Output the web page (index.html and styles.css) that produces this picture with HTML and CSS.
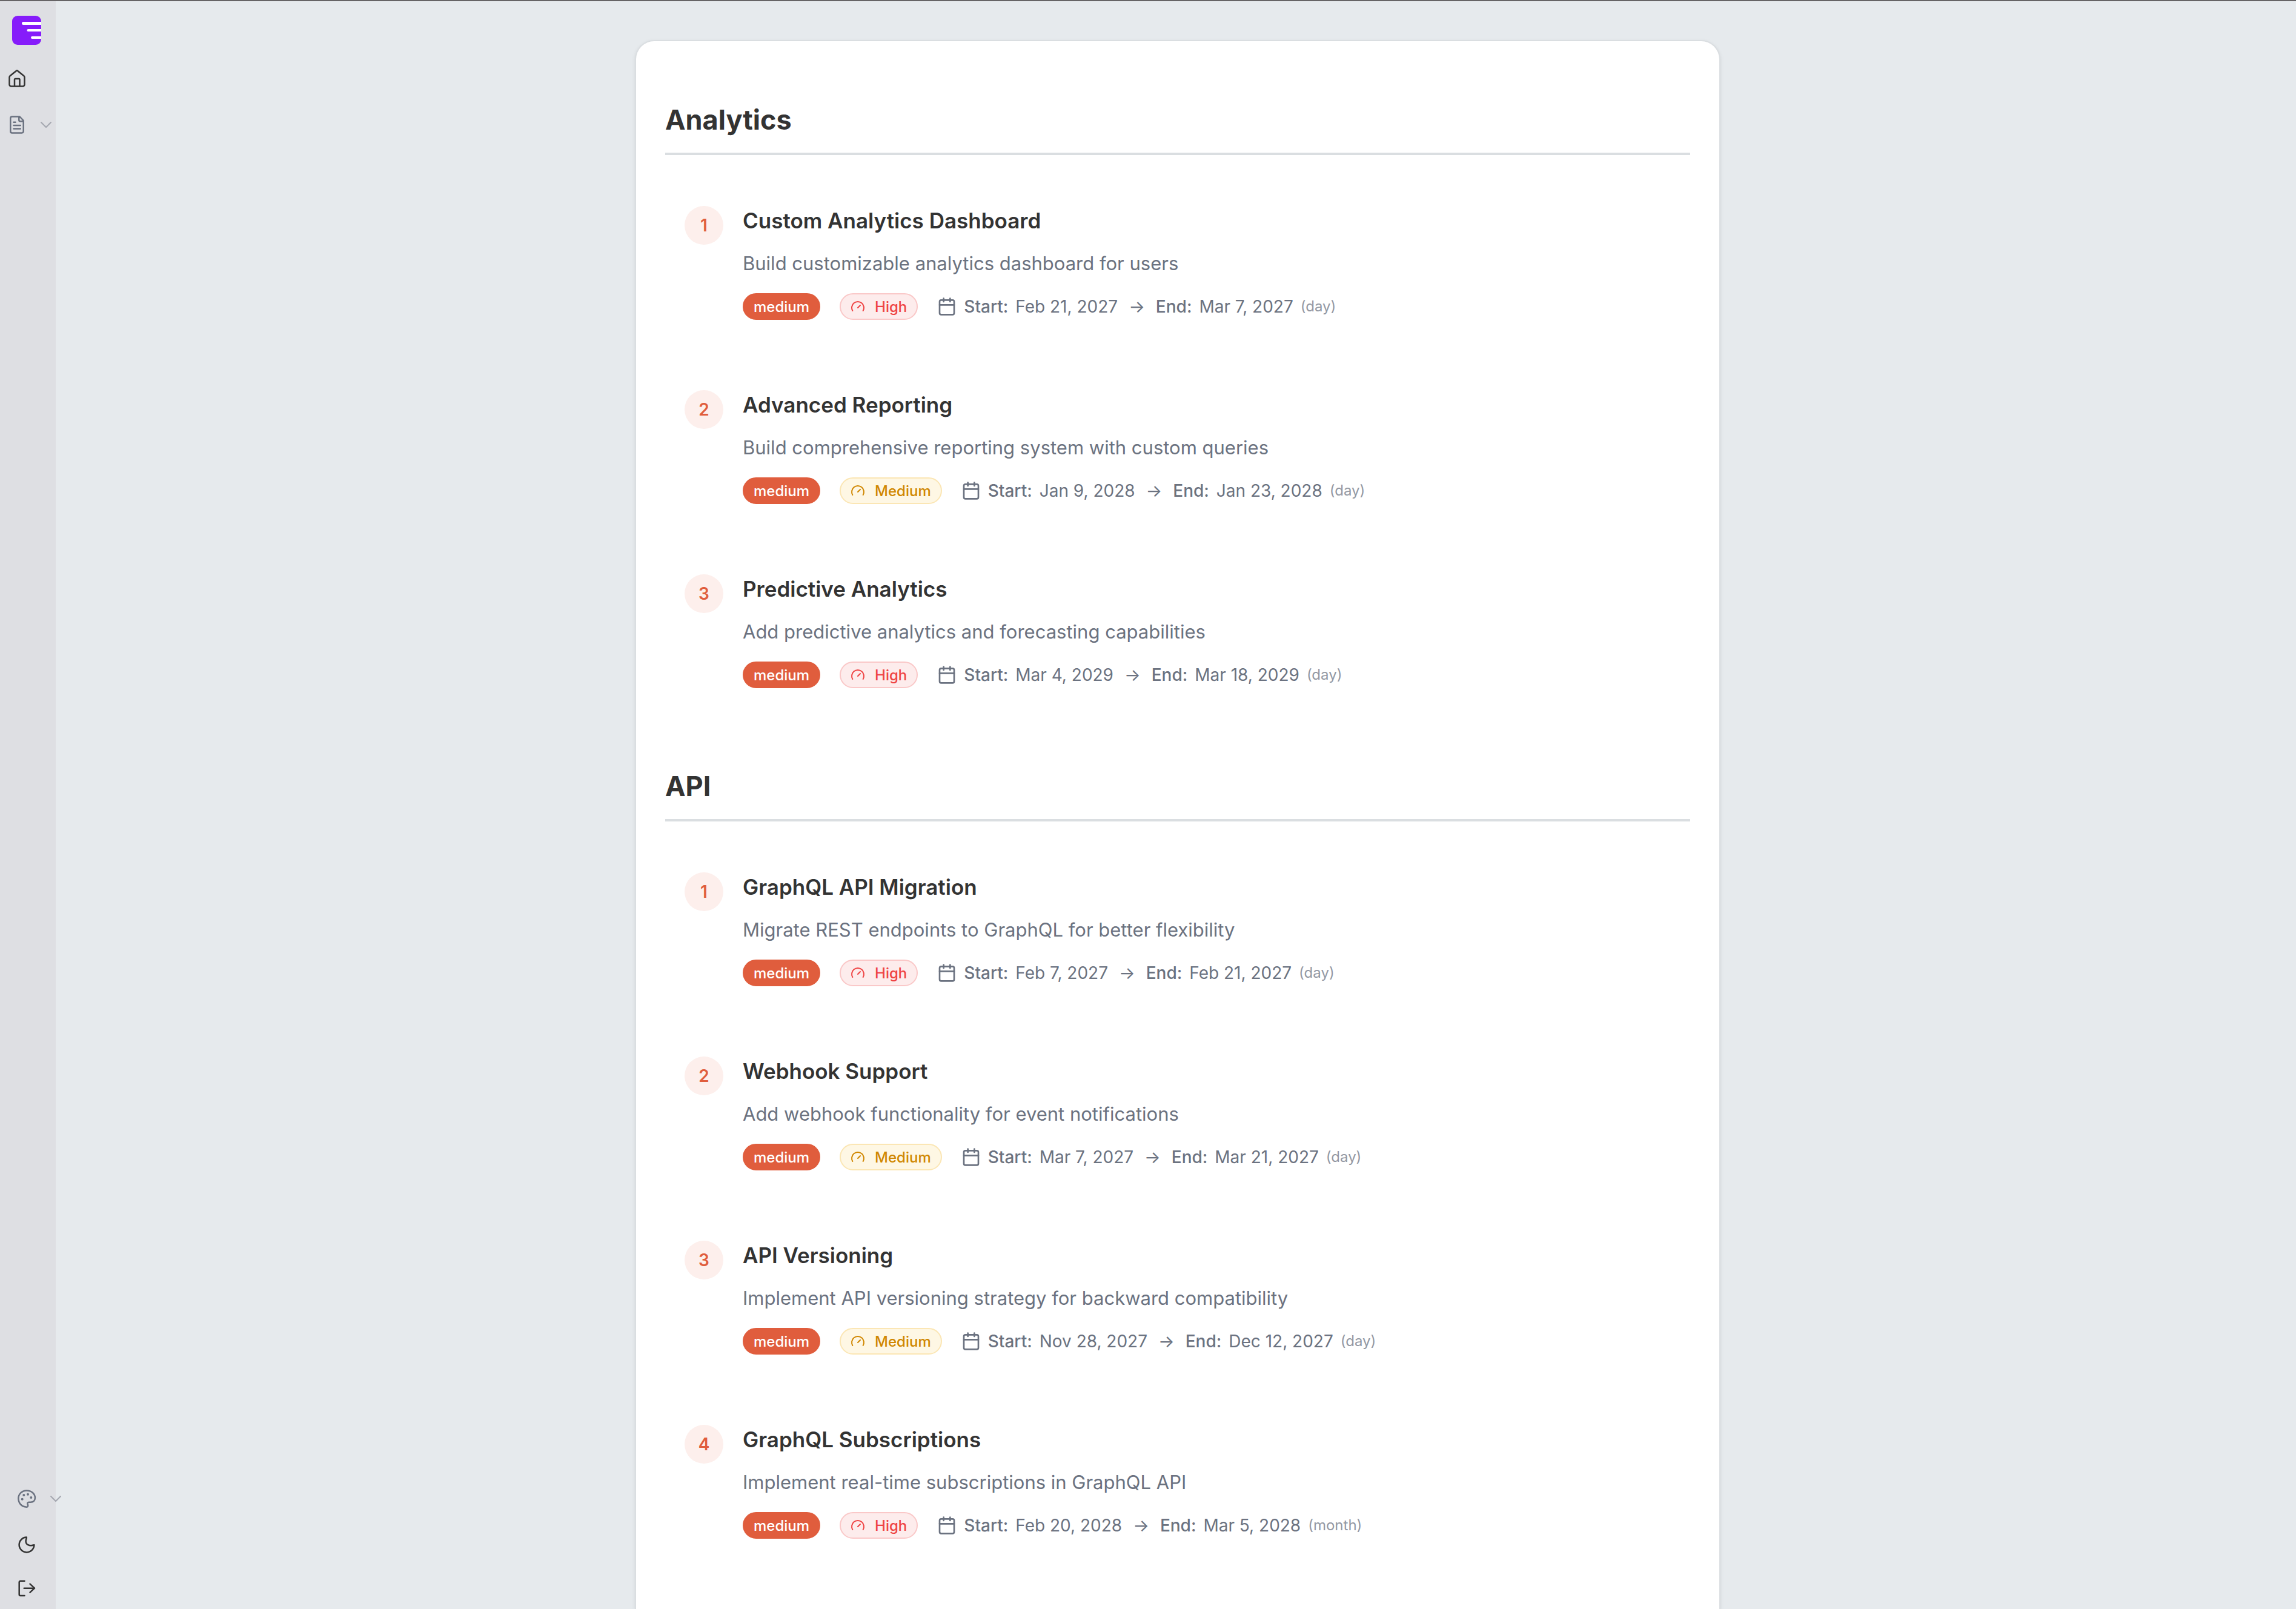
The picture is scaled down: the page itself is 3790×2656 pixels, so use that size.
FILE: index.html
```html
<!DOCTYPE html>
<html lang="en">
<head>
<meta charset="utf-8">
<meta name="viewport" content="width=device-width, initial-scale=1">
<title>Roadmap</title>
<link rel="stylesheet" href="styles.css">
</head>
<body>
<svg class="sprite" aria-hidden="true">
  <symbol id="gauge" viewBox="0 0 24 24"><path d="m12 14 4-4M3.340 19a10 10 0 1 1 17.320 0"/></symbol>
  <symbol id="calendar" viewBox="0 0 24 24"><path d="M8 2v4M16 2v4M3 10h18"/><rect x="3" y="4" width="18" height="18" rx="2"/></symbol>
  <symbol id="chevron" viewBox="0 0 24 24"><path d="m4 8 8 8 8-8"/></symbol>
</svg>
<div class="app">
  <nav class="sidebar" aria-label="Main">
    <div class="nav-group top">
      <a class="logo" href="#" aria-label="Start page"><svg viewBox="0 0 48 48"><rect width="48" height="48" rx="9" fill="#861cfa"/><path d="M48 10H18.500a2.500 2.500 0 0 0 0 5H48zM48 22H26.500a2 2 0 0 0 0 4H48zM48 34H33a2 2 0 0 0 0 4H48z" fill="#fff"/></svg></a>
      <a class="nav-link" href="#" aria-label="Home"><svg class="icon" viewBox="0 0 32 32"><path d="M14.500 3.200a2.300 2.300 0 0 1 3 0l9.900 8a3 3 0 0 1 1.100 2.300V25.500a3 3 0 0 1-3 3h-19a3 3 0 0 1-3-3v-12a3 3 0 0 1 1.100-2.300zM12 28.500V17.200a1.300 1.300 0 0 1 1.300-1.300h5.900a1.300 1.300 0 0 1 1.300 1.300v11.300"/></svg></a>
      <button class="nav-link muted" type="button" aria-label="Documents"><svg class="icon" viewBox="0 0 32 32"><path d="M20.500 2.500H8a2.700 2.700 0 0 0-2.700 2.700v21.600A2.700 2.700 0 0 0 8 29.500h16a2.700 2.700 0 0 0 2.700-2.700V9zM19.300 2.500v5.700a2 2 0 0 0 2 2h5.400M10.500 11.700h3M10.500 17h11.300M10.500 22.500h11.300"/></svg><svg class="chevron"><use href="#chevron"/></svg></button>
    </div>
    <div class="nav-group bottom">
      <button class="nav-link muted" type="button" aria-label="Theme"><svg class="icon" viewBox="0 0 32 32"><path d="M16 29.700C7 29.500 2.400 22.500 2.400 15.500 2.400 8 8.500 2.400 16 2.400c8 0 13.900 5.500 13.900 12.200 0 4.400-3 7.100-7.400 7.100h-3c-2 0-2.400 1.400-1.900 3 .8 2.500 1 5-1.600 5z"/><path class="dots" d="M11.300 10h.01M18 8.700h.01M23.300 14h.01M8.700 16.700h.01"/></svg><svg class="chevron"><use href="#chevron"/></svg></button>
      <button class="nav-link" type="button" aria-label="Dark mode"><svg class="icon" viewBox="0 0 32 32"><path d="M15.800 3.600A12.400 12.400 0 1 0 28.400 16.300c-7.400 2.200-15-.1-13.600-8 .4-2 1.400-3.600 1-4.700z"/></svg></button>
      <button class="nav-link last" type="button" aria-label="Log out"><svg class="icon" viewBox="0 0 32 32"><path d="M12.500 3.700H5.700a2 2 0 0 0-2 2V26a2 2 0 0 0 2 2h6.800M11.700 15.700H29M21.500 8.700l7.500 7-7.500 7"/></svg></button>
    </div>
  </nav>
  <main class="main">
    <div class="card">
      <section>
        <h2>Analytics</h2>
        <ol class="items">
          <li class="item">
            <span class="num">1</span>
            <div>
              <h3>Custom Analytics Dashboard</h3>
              <p>Build customizable analytics dashboard for users</p>
              <div class="meta">
                <span class="chip solid">medium</span>
                <span class="chip high"><svg><use href="#gauge"/></svg>High</span>
                <div class="dates"><svg><use href="#calendar"/></svg><b>Start:</b><time>Feb 21, 2027</time><span class="arrow">→</span><b>End:</b><time>Mar 7, 2027</time><small>(day)</small></div>
              </div>
            </div>
          </li>
          <li class="item">
            <span class="num">2</span>
            <div>
              <h3>Advanced Reporting</h3>
              <p>Build comprehensive reporting system with custom queries</p>
              <div class="meta">
                <span class="chip solid">medium</span>
                <span class="chip mid"><svg><use href="#gauge"/></svg>Medium</span>
                <div class="dates"><svg><use href="#calendar"/></svg><b>Start:</b><time>Jan 9, 2028</time><span class="arrow">→</span><b>End:</b><time>Jan 23, 2028</time><small>(day)</small></div>
              </div>
            </div>
          </li>
          <li class="item">
            <span class="num">3</span>
            <div>
              <h3>Predictive Analytics</h3>
              <p>Add predictive analytics and forecasting capabilities</p>
              <div class="meta">
                <span class="chip solid">medium</span>
                <span class="chip high"><svg><use href="#gauge"/></svg>High</span>
                <div class="dates"><svg><use href="#calendar"/></svg><b>Start:</b><time>Mar 4, 2029</time><span class="arrow">→</span><b>End:</b><time>Mar 18, 2029</time><small>(day)</small></div>
              </div>
            </div>
          </li>
        </ol>
      </section>
      <section>
        <h2>API</h2>
        <ol class="items">
          <li class="item">
            <span class="num">1</span>
            <div>
              <h3>GraphQL API Migration</h3>
              <p>Migrate REST endpoints to GraphQL for better flexibility</p>
              <div class="meta">
                <span class="chip solid">medium</span>
                <span class="chip high"><svg><use href="#gauge"/></svg>High</span>
                <div class="dates"><svg><use href="#calendar"/></svg><b>Start:</b><time>Feb 7, 2027</time><span class="arrow">→</span><b>End:</b><time>Feb 21, 2027</time><small>(day)</small></div>
              </div>
            </div>
          </li>
          <li class="item">
            <span class="num">2</span>
            <div>
              <h3>Webhook Support</h3>
              <p>Add webhook functionality for event notifications</p>
              <div class="meta">
                <span class="chip solid">medium</span>
                <span class="chip mid"><svg><use href="#gauge"/></svg>Medium</span>
                <div class="dates"><svg><use href="#calendar"/></svg><b>Start:</b><time>Mar 7, 2027</time><span class="arrow">→</span><b>End:</b><time>Mar 21, 2027</time><small>(day)</small></div>
              </div>
            </div>
          </li>
          <li class="item">
            <span class="num">3</span>
            <div>
              <h3>API Versioning</h3>
              <p>Implement API versioning strategy for backward compatibility</p>
              <div class="meta">
                <span class="chip solid">medium</span>
                <span class="chip mid"><svg><use href="#gauge"/></svg>Medium</span>
                <div class="dates"><svg><use href="#calendar"/></svg><b>Start:</b><time>Nov 28, 2027</time><span class="arrow">→</span><b>End:</b><time>Dec 12, 2027</time><small>(day)</small></div>
              </div>
            </div>
          </li>
          <li class="item">
            <span class="num">4</span>
            <div>
              <h3>GraphQL Subscriptions</h3>
              <p>Implement real-time subscriptions in GraphQL API</p>
              <div class="meta">
                <span class="chip solid">medium</span>
                <span class="chip high"><svg><use href="#gauge"/></svg>High</span>
                <div class="dates"><svg><use href="#calendar"/></svg><b>Start:</b><time>Feb 20, 2028</time><span class="arrow">→</span><b>End:</b><time>Mar 5, 2028</time><small>(month)</small></div>
              </div>
            </div>
          </li>
        </ol>
      </section>
    </div>
  </main>
</div>
</body>
</html>
```

FILE: styles.css
```css
* {
  box-sizing: border-box;
}

body {
  margin: 0;
  border-top: 2px solid #666466;
  font-family: Inter, "Liberation Sans", sans-serif;
  background: #e6eaed;
  color: #333;
}

.sprite {
  display: none;
}

svg {
  display: block;
  flex: none;
  width: 32px;
  height: 32px;
  fill: none;
  stroke: currentColor;
  stroke-width: 2;
  stroke-linecap: round;
  stroke-linejoin: round;
}

.app {
  display: grid;
  grid-template-columns: 92px 1fr;
  min-height: calc(100vh - 2px);
}

/* Sidebar */
.sidebar {
  position: sticky;
  top: 0;
  z-index: 1;
  height: calc(100vh - 2px);
  display: flex;
  flex-direction: column;
  justify-content: space-between;
  background: #dedfe3;
}

.nav-group {
  display: flex;
  flex-direction: column;
  align-items: flex-start;
}

.top {
  padding-left: 12px;
}

.bottom {
  padding-left: 28px;
}

.logo {
  margin: 24px 0 18px 8px;
}

.logo svg {
  width: 48px;
  height: 48px;
  stroke: none;
}

.nav-link {
  display: flex;
  align-items: center;
  gap: 20px;
  height: 76px;
  padding: 0;
  border: 0;
  background: none;
  color: #333;
  cursor: pointer;
}

.nav-link.last {
  height: 68px;
}

.nav-link.muted {
  color: #6b7280;
}

.icon {
  stroke-width: 2.5;
}

.dots {
  stroke-width: 4;
}

.chevron {
  width: 24px;
  height: 24px;
  color: #a4a7b0;
}

/* Roadmap card */
.main {
  display: flex;
  justify-content: center;
  padding: 64px 0 0 6px;
}

.card {
  flex: 0 1 1792px;
  padding: 96px 48px 0;
  border: 2px solid #dadee1;
  border-bottom: 0;
  border-radius: 32px 32px 0 0;
  background: #fff;
  box-shadow: 0 2px 6px rgba(0, 0, 0, .08);
}

section + section {
  margin-top: 80px;
}

h2 {
  margin: 0 0 32px;
  padding-bottom: 20px;
  border-bottom: 4px solid #dadee1;
  font-size: 45px;
  line-height: 68px;
  font-weight: 700;
}

.items {
  display: flex;
  flex-direction: column;
  gap: 16px;
  margin: 0;
  padding: 0;
  list-style: none;
}

.item {
  display: flex;
  align-items: flex-start;
  gap: 32px;
  padding: 48px 32px;
}

.num {
  flex: none;
  width: 64px;
  margin-top: 4px;
  border-radius: 50%;
  background: #fdefec;
  color: #e05d3d;
  font-size: 28px;
  line-height: 64px;
  font-weight: 600;
  text-align: center;
}

h3 {
  margin: 0 0 16px;
  font-size: 35px;
  line-height: 56px;
  font-weight: 600;
}

p {
  margin: 0 0 22px;
  color: #6b7280;
  font-size: 31px;
  line-height: 54px;
}

.meta {
  display: flex;
  flex-wrap: wrap;
  align-items: center;
  gap: 32px;
}

.chip {
  display: flex;
  align-items: center;
  gap: 16px;
  height: 44px;
  padding: 0 16px;
  border: 2px solid;
  border-radius: 22px;
  font-size: 24px;
  font-weight: 500;
}

.chip svg {
  width: 24px;
  height: 24px;
}

.solid {
  border-color: #e05d3d;
  background: #e05d3d;
  color: #fff;
}

.high {
  border-color: #fac8c8;
  background: #fdecec;
  color: #ef4444;
}

.mid {
  border-color: #fbe6b4;
  background: #fef7e4;
  color: #d08700;
}

.dates {
  display: flex;
  align-items: center;
  gap: 12px;
  color: #6b7280;
  font-size: 28px;
  line-height: 40px;
}

.dates b {
  font-weight: 500;
}

.dates small {
  color: #9398a3;
  font-size: 24px;
}

.arrow {
  margin: 0 6px;
}
```
